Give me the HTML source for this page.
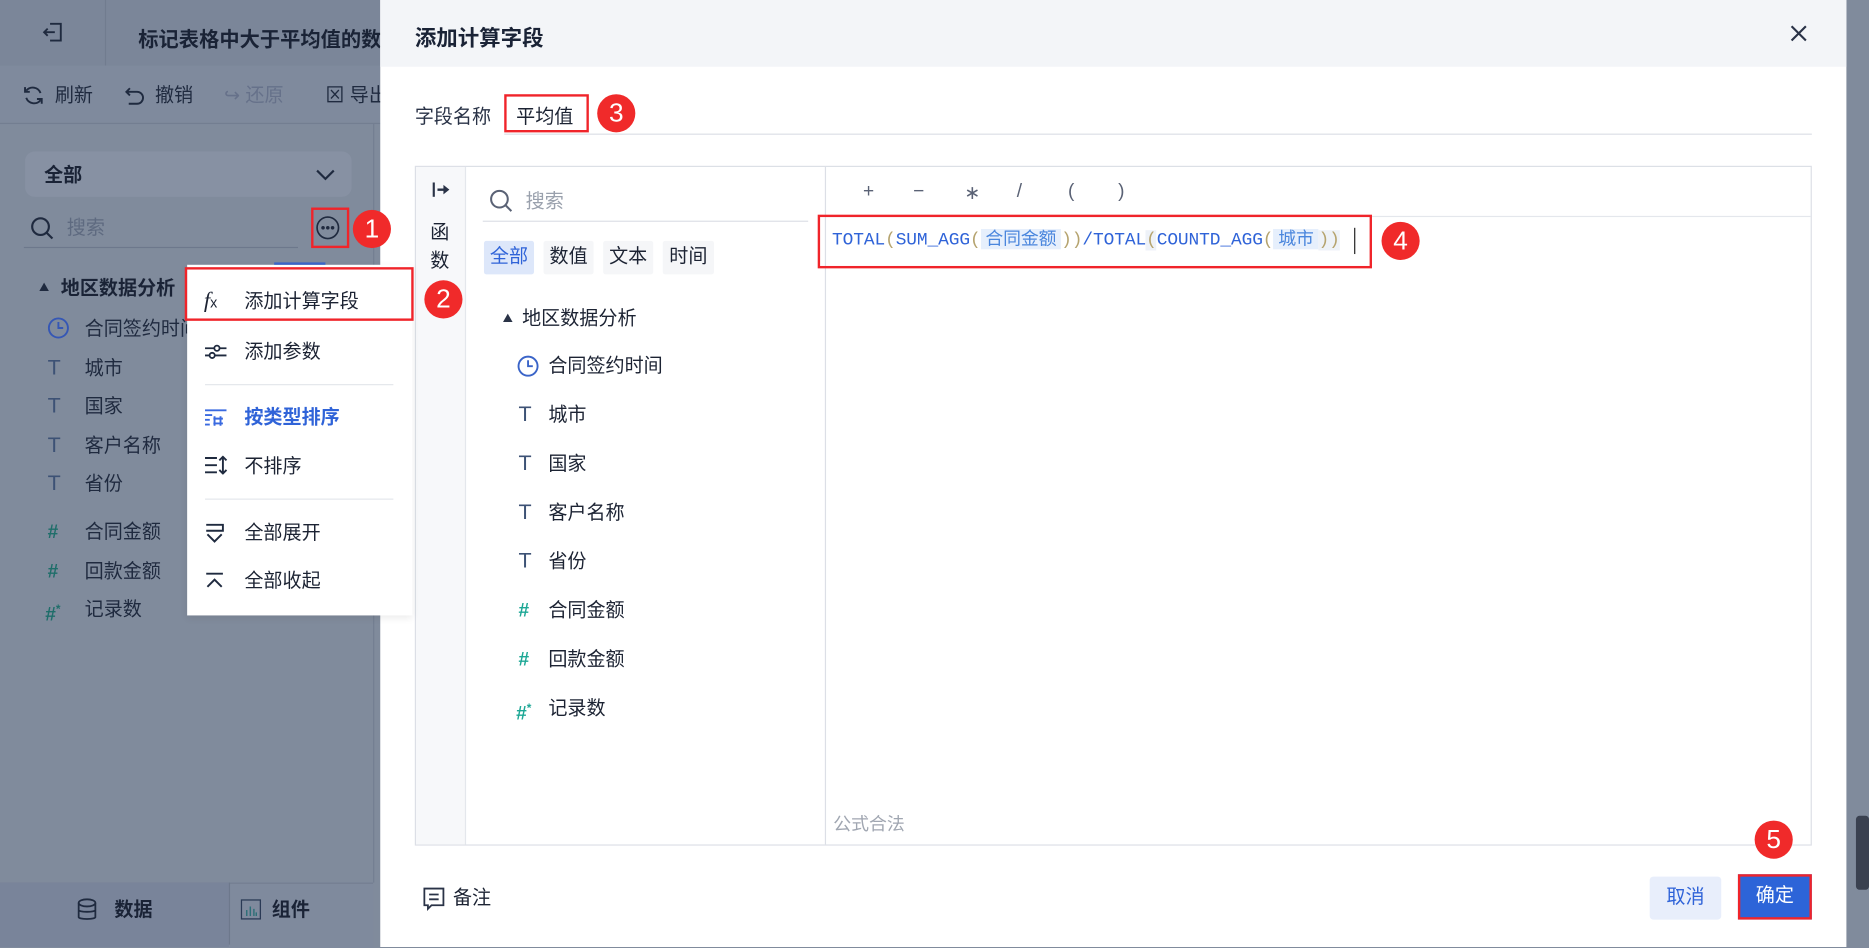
<!DOCTYPE html>
<html><head><meta charset="utf-8"><style>
html,body{margin:0;padding:0;width:1869px;height:947px;overflow:hidden;background:#808b9c}
#w{position:absolute;left:0;top:0;width:1568px;height:794px;transform:scale(1.192,1.1927);transform-origin:0 0;font-family:"Liberation Sans","Noto Sans CJK SC",sans-serif;color:#1c2333}
.a{position:absolute;white-space:nowrap}
.t{font-size:16px;line-height:20px;margin-top:2px}
.rc{position:absolute;width:32px;height:32px;border-radius:50%;background:#f02a2a;color:#fff;font-size:22px;line-height:32px;text-align:center;font-family:"Liberation Sans",sans-serif}
.rb{position:absolute;border:2px solid #f0242a;box-sizing:border-box}
.dk{color:#1f2a3f}
</style></head><body><div id="w">
<!-- background app -->
<div class="a" style="left:0;top:0;width:1568px;height:55px;background:#7b8699"></div>
<div class="a" style="left:88px;top:0;width:1px;height:55px;background:#717c8f"></div>
<svg class="a" style="left:34px;top:17px" width="20" height="20" viewBox="0 0 20 20" fill="none" stroke="#1f2a3f" stroke-width="1.6"><path d="M8 3h9v14H8M12 10H3M6 7l-3 3 3 3"/></svg>
<div class="a" style="left:116px;top:19px;font-size:17px;font-weight:bold;color:#1a2336">标记表格中大于平均值的数据</div>
<div class="a" style="left:0;top:55px;width:1568px;height:48px;background:#7f8a9d"></div>
<div class="a" style="left:0;top:103px;width:1568px;height:1px;background:#737e91"></div>
<svg class="a" style="left:18px;top:70px" width="20" height="20" viewBox="0 0 20 20" fill="none" stroke="#1f2a3f" stroke-width="1.6"><path d="M16 8a7 7 0 0 0-12-2M4 12a7 7 0 0 0 12 2M3 3v4h4M17 17v-4h-4"/></svg>
<div class="a t dk" style="left:46px;top:69px">刷新</div>
<svg class="a" style="left:103px;top:70px" width="20" height="20" viewBox="0 0 20 20" fill="none" stroke="#1f2a3f" stroke-width="1.6"><path d="M6 4L3 7l3 3M3 7h9a5 5 0 0 1 0 10H5"/></svg>
<div class="a t dk" style="left:130px;top:69px">撤销</div>
<div class="a t" style="left:188px;top:69px;color:#66718a">↪ 还原</div>
<div class="a t dk" style="left:273px;top:69px">⊠ 导出</div>
<div class="a" style="left:313px;top:104px;width:1px;height:636px;background:#737e91"></div>
<div class="a" style="left:21px;top:127px;width:274px;height:38px;background:#8791a3;border-radius:8px"></div>
<div class="a t" style="left:37px;top:136px;font-weight:bold;color:#1a2336">全部</div>
<svg class="a" style="left:264px;top:139px" width="18" height="14" viewBox="0 0 18 14" fill="none" stroke="#1f2a3f" stroke-width="1.8"><path d="M2 4l7 7 7-7"/></svg>
<svg class="a" style="left:25px;top:181px" width="22" height="22" viewBox="0 0 22 22" fill="none" stroke="#1f2a3f" stroke-width="1.8"><circle cx="9" cy="9" r="7"/><path d="M14 14l5 5"/></svg>
<div class="a t" style="left:56px;top:180px;color:#5e6a80">搜索</div>
<div class="a" style="left:20px;top:207px;width:230px;height:1px;background:#6d788c"></div>
<svg class="a" style="left:264px;top:180px" width="22" height="22" viewBox="0 0 22 22" fill="none" stroke="#1f2a3f" stroke-width="1.4"><circle cx="11" cy="11" r="9"/><circle cx="7" cy="11" r=".8" fill="#1f2a3f"/><circle cx="11" cy="11" r=".8" fill="#1f2a3f"/><circle cx="15" cy="11" r=".8" fill="#1f2a3f"/></svg>
<div class="rb" style="left:261px;top:174px;width:32px;height:34px"></div>
<div class="a" style="left:33px;top:237px;width:0;height:0;border-left:4px solid transparent;border-right:4px solid transparent;border-bottom:7px solid #1f2a3f"></div>
<div class="a t" style="left:51px;top:231px;font-weight:bold;color:#1a2336">地区数据分析</div>
<svg class="a" style="left:39px;top:265px" width="20" height="20" viewBox="0 0 20 20" fill="none" stroke="#3557b5" stroke-width="1.6"><circle cx="10" cy="10" r="8"/><path d="M10 5v5h4"/></svg>
<div class="a t dk" style="left:71px;top:265px">合同签约时间</div>
<div class="a t" style="left:40px;top:296px;color:#3d5275;font-size:18px">T</div><div class="a t dk" style="left:71px;top:298px">城市</div>
<div class="a t" style="left:40px;top:328px;color:#3d5275;font-size:18px">T</div><div class="a t dk" style="left:71px;top:330px">国家</div>
<div class="a t" style="left:40px;top:361px;color:#3d5275;font-size:18px">T</div><div class="a t dk" style="left:71px;top:363px">客户名称</div>
<div class="a t" style="left:40px;top:393px;color:#3d5275;font-size:18px">T</div><div class="a t dk" style="left:71px;top:395px">省份</div>
<div class="a t" style="left:40px;top:435px;color:#1f6e6a;font-weight:bold">#</div><div class="a t dk" style="left:71px;top:435px">合同金额</div>
<div class="a t" style="left:40px;top:468px;color:#1f6e6a;font-weight:bold">#</div><div class="a t dk" style="left:71px;top:468px">回款金额</div>
<div class="a t" style="left:38px;top:500px;color:#1f6e6a;font-weight:bold">#<sup style="font-size:10px">*</sup></div><div class="a t dk" style="left:71px;top:500px">记录数</div>
<!-- bottom tabs -->
<div class="a" style="left:0;top:740px;width:313px;height:54px;background:#7f8a9d;border-top:1px solid #737e91"></div>
<div class="a" style="left:0;top:740px;width:192px;height:54px;background:#79849a"></div>
<div class="a" style="left:192px;top:740px;width:1px;height:52px;background:#6d788c"></div>
<svg class="a" style="left:64px;top:753px" width="18" height="20" viewBox="0 0 18 20" fill="none" stroke="#1f2a3f" stroke-width="1.5"><ellipse cx="9" cy="4" rx="7" ry="3"/><path d="M2 4v12c0 2 14 2 14 0V4M2 10c0 2 14 2 14 0"/></svg>
<div class="a t" style="left:96px;top:752px;font-weight:bold;color:#1a2336">数据</div>
<svg class="a" style="left:202px;top:754px" width="17" height="17" viewBox="0 0 17 17" fill="none" stroke="#2a3a55" stroke-width="1.2"><rect x=".5" y=".5" width="16" height="16"/><path d="M5 14V9M8 14V6M11 14V8M13 14v-3" stroke="#2d6f78"/></svg>
<div class="a t" style="left:228px;top:752px;font-weight:bold;color:#1a2336">组件</div>
<div class="a" style="left:1549px;top:0;width:19px;height:794px;background:#808b9c"></div>
<div class="a" style="left:1557px;top:684px;width:11px;height:62px;background:#3a4150;border-radius:3px"></div>
<!-- modal -->
<div class="a" style="left:319px;top:0;width:1230px;height:794px;background:#fff"></div>
<div class="a" style="left:319px;top:0;width:1230px;height:56px;background:#f3f5f8"></div>
<div class="a" style="left:348px;top:18px;font-size:18px;font-weight:bold;color:#1a2336">添加计算字段</div>
<svg class="a" style="left:1501px;top:20px" width="16" height="16" viewBox="0 0 16 16" stroke="#2a3347" stroke-width="1.8"><path d="M2 2l12 12M14 2L2 14"/></svg>
<div class="a t" style="left:348px;top:87px;color:#2a3347">字段名称</div>
<div class="a t" style="left:433px;top:87px">平均值</div>
<div class="rb" style="left:423px;top:79px;width:71px;height:32px"></div>
<div class="a" style="left:423px;top:112px;width:1097px;height:1px;background:#dcdfe6"></div>
<div class="rc" style="left:501px;top:79px">3</div>
<div class="a" style="left:348px;top:139px;width:1172px;height:570px;border:1px solid #dcdfe6;box-sizing:border-box"></div>
<div class="a" style="left:349px;top:140px;width:41px;height:568px;background:#f7f8fa;border-right:1px solid #e4e7ec"></div>
<svg class="a" style="left:362px;top:152px" width="16" height="14" viewBox="0 0 16 14" fill="#2a3347"><rect x="1" y="1" width="1.8" height="12"/><path d="M5 6h5V3l5 4-5 4V8H5z"/></svg>
<div class="a t" style="left:361px;top:182px;line-height:24px;width:16px;white-space:normal">函 数</div>
<svg class="a" style="left:410px;top:158px" width="22" height="22" viewBox="0 0 22 22" fill="none" stroke="#5a6275" stroke-width="1.7"><circle cx="9" cy="9" r="7"/><path d="M14 14l5 5"/></svg>
<div class="a t" style="left:441px;top:158px;color:#9aa1ad">搜索</div>
<div class="a" style="left:405px;top:185px;width:273px;height:1px;background:#dcdfe6"></div>
<div class="a" style="left:406px;top:202px;width:42px;height:28px;line-height:28px;font-size:16px;text-align:center;background:#dde7fa;color:#2f63d8;border-radius:2px">全部</div>
<div class="a" style="left:456px;top:202px;width:42px;height:28px;line-height:28px;font-size:16px;text-align:center;background:#f5f6f8;border-radius:2px">数值</div>
<div class="a" style="left:506px;top:202px;width:42px;height:28px;line-height:28px;font-size:16px;text-align:center;background:#f5f6f8;border-radius:2px">文本</div>
<div class="a" style="left:556px;top:202px;width:43px;height:28px;line-height:28px;font-size:16px;text-align:center;background:#f5f6f8;border-radius:2px">时间</div>
<div class="a" style="left:422px;top:263px;width:0;height:0;border-left:4px solid transparent;border-right:4px solid transparent;border-bottom:7px solid #2a3347"></div>
<div class="a t" style="left:438px;top:256px">地区数据分析</div>
<svg class="a" style="left:433px;top:297px" width="20" height="20" viewBox="0 0 20 20" fill="none" stroke="#3a64c8" stroke-width="1.6"><circle cx="10" cy="10" r="8"/><path d="M10 5v5h4"/></svg>
<div class="a t" style="left:460px;top:296px">合同签约时间</div>
<div class="a t" style="left:435px;top:335px;color:#3d5275;font-size:18px">T</div><div class="a t" style="left:460px;top:337px">城市</div>
<div class="a t" style="left:435px;top:376px;color:#3d5275;font-size:18px">T</div><div class="a t" style="left:460px;top:378px">国家</div>
<div class="a t" style="left:435px;top:417px;color:#3d5275;font-size:18px">T</div><div class="a t" style="left:460px;top:419px">客户名称</div>
<div class="a t" style="left:435px;top:458px;color:#3d5275;font-size:18px">T</div><div class="a t" style="left:460px;top:460px">省份</div>
<div class="a t" style="left:435px;top:501px;color:#1ea896;font-weight:bold">#</div><div class="a t" style="left:460px;top:501px">合同金额</div>
<div class="a t" style="left:435px;top:542px;color:#1ea896;font-weight:bold">#</div><div class="a t" style="left:460px;top:542px">回款金额</div>
<div class="a t" style="left:433px;top:583px;color:#1ea896;font-weight:bold">#<sup style="font-size:10px">*</sup></div><div class="a t" style="left:460px;top:583px">记录数</div>
<div class="a" style="left:692px;top:140px;width:1px;height:568px;background:#dcdfe6"></div>
<div class="a" style="left:693px;top:181px;width:826px;height:1px;background:#e4e7ec"></div>
<div class="a t" style="left:724px;top:149px;color:#5a6275">+</div>
<div class="a t" style="left:766px;top:149px;color:#5a6275">−</div>
<div class="a t" style="left:809px;top:151px;color:#5a6275">∗</div>
<div class="a t" style="left:853px;top:149px;color:#5a6275">/</div>
<div class="a t" style="left:896px;top:149px;color:#5a6275">(</div>
<div class="a t" style="left:938px;top:149px;color:#5a6275">)</div>
<div class="a" style="left:698px;top:191px;font-family:'Liberation Mono','Noto Sans CJK SC',monospace;font-size:15px;line-height:20px;color:#2f63d8;letter-spacing:-.1px">TOTAL<span style="color:#b5a36e">(</span>SUM_AGG<span style="color:#b5a36e">(</span><span style="background:#e6effc;color:#4a86dd;padding:0 4px;font-family:'Liberation Sans','Noto Sans CJK SC',sans-serif">合同金额</span><span style="color:#b5a36e">))</span>/TOTAL<span style="color:#b5a36e;background:#eef2f8">(</span>COUNTD_AGG<span style="color:#b5a36e">(</span><span style="background:#e6effc;color:#4a86dd;padding:0 4px;font-family:'Liberation Sans','Noto Sans CJK SC',sans-serif">城市</span><span style="color:#b5a36e;background:#eef2f8">))</span></div>
<div class="a" style="left:1136px;top:191px;width:1px;height:22px;background:#222"></div>
<div class="rb" style="left:686px;top:180px;width:465px;height:45px"></div>
<div class="rc" style="left:1159px;top:186px">4</div>
<div class="a" style="left:699px;top:680px;font-size:15px;color:#a0a6b1">公式合法</div>
<svg class="a" style="left:355px;top:744px" width="18" height="20" viewBox="0 0 18 20" fill="none" stroke="#2a3347" stroke-width="1.5"><path d="M1 1h16v14H7l-3 3v-3H1z M5 6h8M5 10h8"/></svg>
<div class="a t" style="left:380px;top:742px">备注</div>
<div class="a" style="left:1384px;top:735px;width:60px;height:36px;line-height:36px;font-size:16px;text-align:center;background:#e8eefb;color:#2f63d8;border-radius:3px">取消</div>
<div class="a" style="left:1458px;top:733px;width:62px;height:38px;line-height:34px;font-size:16px;text-align:center;background:#2d64d8;color:#fff;border:2px solid #f0242a;box-sizing:border-box">确定</div>
<div class="rc" style="left:1472px;top:688px">5</div>
<!-- menu (above modal) -->
<div class="a" style="left:157px;top:222px;width:189px;height:294px;background:#fff;box-shadow:0 2px 6px rgba(0,0,0,.08)"></div>
<div class="a" style="left:230px;top:220px;width:43px;height:2px;background:#3a64c8"></div>
<div class="a" style="left:171px;top:242px;font-style:italic;font-family:'Liberation Serif',serif;font-size:19px">f<span style="font-size:12px;font-style:normal;font-family:'Liberation Sans'">x</span></div>
<div class="a t" style="left:205px;top:242px">添加计算字段</div>
<div class="rb" style="left:155px;top:224px;width:192px;height:45px"></div>
<svg class="a" style="left:171px;top:286px" width="20" height="18" viewBox="0 0 20 18" fill="none" stroke="#1f2a3f" stroke-width="1.5"><path d="M1 6h18M1 12h18"/><circle cx="11" cy="6" r="2.2" fill="#fff"/><circle cx="7" cy="12" r="2.2" fill="#fff"/></svg>
<div class="a t" style="left:205px;top:284px">添加参数</div>
<div class="a" style="left:172px;top:322px;width:158px;height:1px;background:#e4e7ec"></div>
<svg class="a" style="left:171px;top:342px" width="20" height="16" viewBox="0 0 20 16" fill="none" stroke="#3a6ae0" stroke-width="1.6"><path d="M1 2h18M1 6h6M1 10h4M1 14h4M9 7v8M14 7v8M8 9h8M8 13h8"/></svg>
<div class="a t" style="left:205px;top:339px;color:#2f63d8;font-weight:bold">按类型排序</div>
<svg class="a" style="left:171px;top:382px" width="20" height="16" viewBox="0 0 20 16" fill="none" stroke="#1f2a3f" stroke-width="1.6"><path d="M1 2h10M1 8h10M1 14h10M16 1v14M13 4l3-3 3 3M13 12l3 3 3-3"/></svg>
<div class="a t" style="left:205px;top:380px">不排序</div>
<div class="a" style="left:172px;top:418px;width:158px;height:1px;background:#e4e7ec"></div>
<svg class="a" style="left:171px;top:438px" width="18" height="18" viewBox="0 0 18 18" fill="none" stroke="#1f2a3f" stroke-width="1.6"><path d="M2 2h14v5H2M3 10l6 6 6-6"/></svg>
<div class="a t" style="left:205px;top:436px">全部展开</div>
<svg class="a" style="left:171px;top:478px" width="18" height="18" viewBox="0 0 18 18" fill="none" stroke="#1f2a3f" stroke-width="1.6"><path d="M2 3h14M3 14l6-6 6 6"/></svg>
<div class="a t" style="left:205px;top:476px">全部收起</div>
<div class="rc" style="left:296px;top:176px">1</div>
<div class="rc" style="left:356px;top:235px">2</div>
</div></body></html>
